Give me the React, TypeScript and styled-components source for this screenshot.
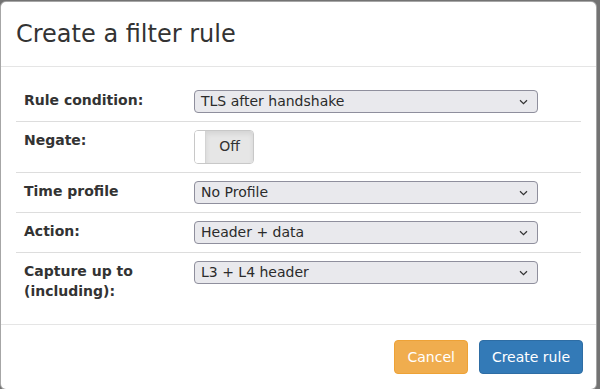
import * as React from 'react';
import styled, { createGlobalStyle } from 'styled-components';

const GlobalStyle = createGlobalStyle`
  html, body {
    margin: 0;
    padding: 0;
    background: #737373;
  }
  body {
    font-family: 'DejaVu Sans', Verdana, sans-serif;
    font-size: 14px;
    line-height: 1.42857;
    color: #333;
  }
`;

const Backdrop = styled.div`
  width: 600px;
  height: 389px;
  padding-top: 1px;
  box-sizing: border-box;
  overflow: hidden;
`;

const Dialog = styled.div`
  width: 597px;
  background: #fff;
  border: 1px solid rgba(0, 0, 0, 0.35);
  border-radius: 6px;
  box-sizing: border-box;
`;

const Header = styled.div`
  padding: 15px;
  border-bottom: 1px solid #e5e5e5;
`;

const Title = styled.h4`
  margin: 0;
  font-size: 24px;
  font-weight: normal;
  line-height: 34px;
  color: #333;
`;

const Body = styled.div`
  padding: 15px;
`;

const Table = styled.table`
  width: 100%;
  border-collapse: collapse;
  border-spacing: 0;
`;

const Row = styled.tr`
  & + & > td {
    border-top: 1px solid #ddd;
  }
`;

const LabelCell = styled.td`
  width: 154px;
  padding: 8px;
  vertical-align: top;
  font-weight: bold;
  line-height: 20px;
  color: #333;
`;

const FieldCell = styled.td`
  padding: 8px;
  vertical-align: top;
`;

const SelectBox = styled.div`
  width: 344px;
  height: 23px;
  box-sizing: border-box;
  border: 1px solid #8f8f9d;
  border-radius: 4px;
  background: #e9e9ed;
  padding: 0 6px;
  font-size: 14px;
  line-height: 21px;
  color: #2b2b2b;
  display: flex;
  align-items: center;
  justify-content: space-between;
`;

const Chevron = styled.svg`
  width: 9px;
  height: 6px;
  margin-right: 3px;
  flex: none;
`;

const Toggle = styled.div`
  display: flex;
  width: 60px;
  height: 34px;
  box-sizing: border-box;
  border: 1px solid #c8c8c8;
  border-radius: 4px;
  overflow: hidden;
`;

const Handle = styled.div`
  width: 10px;
  background: #fff;
  border-right: 1px solid #d4d4d4;
`;

const ToggleLabel = styled.div`
  flex: 1;
  display: flex;
  align-items: center;
  justify-content: center;
  background: #e6e6e6;
  box-shadow: inset 0 3px 5px rgba(0, 0, 0, 0.08);
  color: #333;
  font-size: 14px;
`;

const Footer = styled.div`
  padding: 15px 13px 15px 15px;
  border-top: 1px solid #e5e5e5;
  display: flex;
  justify-content: flex-end;
  gap: 11px;
`;

const Button = styled.button<{ $variant: 'warning' | 'primary' }>`
  font-family: inherit;
  font-size: 14px;
  line-height: 20px;
  padding: 6px 12px;
  border-radius: 4px;
  color: #fff;
  cursor: pointer;
  border: 1px solid
    ${({ $variant }) => ($variant === 'warning' ? '#eea236' : '#2e6da4')};
  background: ${({ $variant }) =>
    $variant === 'warning' ? '#f0ad4e' : '#337ab7'};
`;

function Select({ value }: { value: string }) {
  return (
    <SelectBox>
      <span>{value}</span>
      <Chevron viewBox="0 0 9 6">
        <path d="M1 1.2 L4.5 4.6 L8 1.2" fill="none" stroke="#333" strokeWidth="1.2" />
      </Chevron>
    </SelectBox>
  );
}

export default function App() {
  return (
    <>
      <GlobalStyle />
      <Backdrop>
        <Dialog>
          <Header>
            <Title>Create a filter rule</Title>
          </Header>
          <Body>
            <Table>
              <tbody>
                <Row>
                  <LabelCell>Rule condition:</LabelCell>
                  <FieldCell>
                    <Select value="TLS after handshake" />
                  </FieldCell>
                </Row>
                <Row>
                  <LabelCell>Negate:</LabelCell>
                  <FieldCell>
                    <Toggle>
                      <Handle />
                      <ToggleLabel>Off</ToggleLabel>
                    </Toggle>
                  </FieldCell>
                </Row>
                <Row>
                  <LabelCell>Time profile</LabelCell>
                  <FieldCell>
                    <Select value="No Profile" />
                  </FieldCell>
                </Row>
                <Row>
                  <LabelCell>Action:</LabelCell>
                  <FieldCell>
                    <Select value="Header + data" />
                  </FieldCell>
                </Row>
                <Row>
                  <LabelCell>
                    Capture up to
                    <br />
                    (including):
                  </LabelCell>
                  <FieldCell>
                    <Select value="L3 + L4 header" />
                  </FieldCell>
                </Row>
              </tbody>
            </Table>
          </Body>
          <Footer>
            <Button $variant="warning">Cancel</Button>
            <Button $variant="primary">Create rule</Button>
          </Footer>
        </Dialog>
      </Backdrop>
    </>
  );
}
